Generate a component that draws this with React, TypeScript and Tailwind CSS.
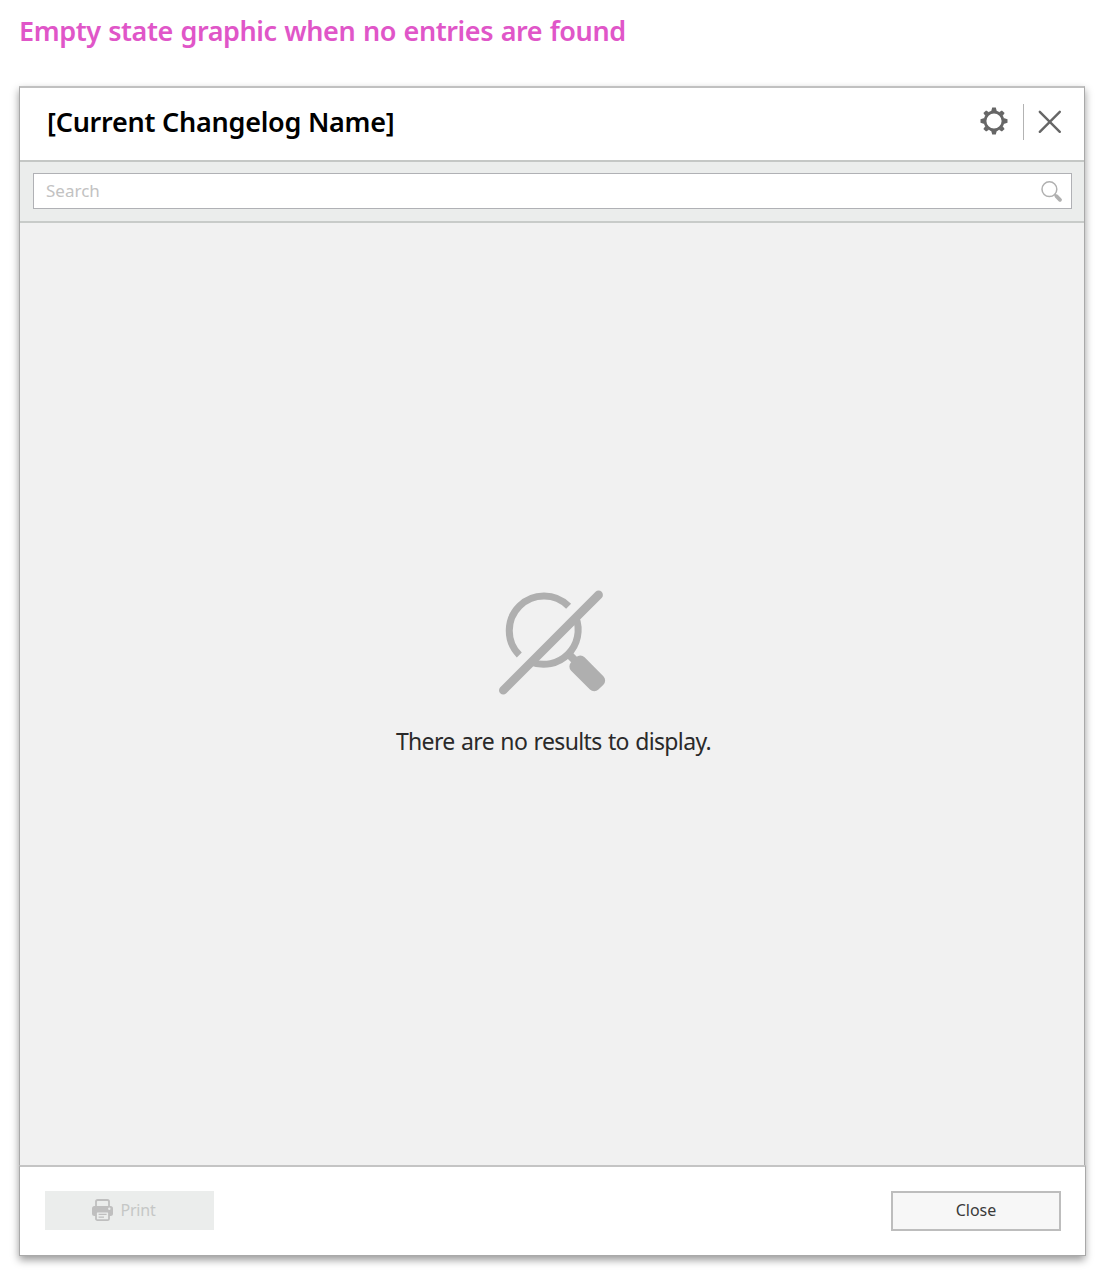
import React from "react";

const TEETH = [0, 45, 90, 135, 180, 225, 270, 315];

function GearIcon() {
  return (
    <svg width="28" height="28" viewBox="-14 -14 28 28" className="mb-[3px] block shrink-0">
      <circle r="9" fill="none" stroke="#666" strokeWidth="2.8" />
      {TEETH.map((a) => (
        <path
          key={a}
          d={a % 90 === 0 ? "M-2.9-9.6-1.8-13.5H1.8L2.9-9.6Z" : "M-2.6-9.6-1.9-13.1H1.9L2.6-9.6Z"}
          fill="#666"
          transform={`rotate(${a})`}
        />
      ))}
    </svg>
  );
}

function CloseIcon() {
  return (
    <svg width="24" height="24" viewBox="0 0 24 24" className="block shrink-0">
      <path d="M1.8 1.8 21.8 21.8M21.8 1.8 1.8 21.8" stroke="#666" strokeWidth="2.4" strokeLinecap="round" />
    </svg>
  );
}

function SearchIcon() {
  return (
    <svg width="22" height="22" viewBox="0 0 22 22" className="block shrink-0" fill="none" stroke="#b0b0b0">
      <circle cx="8.4" cy="8.2" r="7.4" strokeWidth="1.5" />
      <path d="M13.4 13.2 16 16" strokeWidth="1.8" />
      <path d="M15.4 15.2 19 18.8" strokeWidth="3.8" strokeLinecap="round" />
    </svg>
  );
}

function NoResultsIcon() {
  return (
    <svg width="110" height="108" viewBox="498 588 110 108" className="ml-0.5 block" fill="none" stroke="#afafaf">
      <path d="M519.3 655A34.5 34.5 0 0 1 568.6 606.2" strokeWidth="7" />
      <path d="M575.8 617.3A34.5 34.5 0 0 1 531 661.9" strokeWidth="7" />
      <path d="M503.3 690.2 598.6 594.9" strokeWidth="8.6" strokeLinecap="round" />
      <path d="M568 653.5 577 662.5" strokeWidth="8" />
      <rect
        x="-19.5"
        y="-9.5"
        width="38.6"
        height="19"
        rx="6"
        fill="#afafaf"
        stroke="none"
        transform="translate(587.4 673.6) rotate(45)"
      />
    </svg>
  );
}

function PrinterIcon() {
  return (
    <svg width="21" height="22" viewBox="0 0 21 22" className="block shrink-0">
      <path d="M4 8V2.6Q4 1 5.6 1H15.4Q17 1 17 2.6V8" fill="none" stroke="#bfbfbf" strokeWidth="1.8" />
      <path d="M2.5 7H18.5Q21 7 21 9.5V14.5Q21 17 18.5 17H2.5Q0 17 0 14.5V9.5Q0 7 2.5 7Z" fill="#bfbfbf" />
      <rect x="4" y="12.5" width="13" height="8.6" rx="1.4" fill="#ebedec" stroke="#bfbfbf" strokeWidth="1.8" />
      <path d="M6.6 15.3H14.6M6.6 18.2H12" stroke="#bfbfbf" strokeWidth="1.3" />
      <circle cx="17.3" cy="9.8" r="1.2" fill="#ebedec" />
    </svg>
  );
}

export default function App() {
  return (
    <div className="h-[1274px] w-[1104px] overflow-hidden bg-white pl-[19px] font-['Noto_Sans',sans-serif]">
      <h1 className="flex h-[86px] items-start pt-[11px] text-[27px] leading-[40px] font-semibold whitespace-nowrap text-[#e056c8]">
        <span className="tracking-[-0.42px] [word-spacing:1px]">Empty state graphic when no entries are found</span>
      </h1>

      <div className="flex h-[1170px] w-[1066px] flex-col shadow-[0_4px_8px_rgba(0,0,0,0.4)]">
        <div className="flex h-[1079px] w-[1066px] flex-col border-x border-t-2 border-x-[#a9a9a9] border-t-[#c0c0c0] bg-[#f1f1f1]">
          <header className="flex h-[74px] items-center border-b-2 border-[#c4c7c5] bg-white pr-[22px] pb-[4px] pl-[27px]">
            <span className="text-[27px] leading-[40px] font-semibold tracking-[-0.25px] whitespace-nowrap text-black">
              [Current Changelog Name]
            </span>
            <div className="ml-auto flex items-center">
              <GearIcon />
              <div className="mr-3.5 ml-[15px] h-9 w-px bg-[#b3b3b3]" />
              <CloseIcon />
            </div>
          </header>

          <div className="flex h-[61px] items-start border-b-2 border-[#c8cbc9] bg-[#ebedec] pt-[11px] pr-3 pl-[13px]">
            <div className="flex h-9 w-full items-center border border-[#b0b1b5] bg-white pr-2 pl-3">
              <span className="text-[17px] text-[#c2c2c2]">Search</span>
              <div className="ml-auto pt-px">
                <SearchIcon />
              </div>
            </div>
          </div>

          <main className="flex flex-1 flex-col items-center pt-[365px]">
            <NoResultsIcon />
            <p className="mt-[29px] ml-[3px] text-[23px] leading-[32px] tracking-[-0.64px] whitespace-nowrap text-[#2a2a2a] [word-spacing:1px]">
              There are no results to display.
            </p>
          </main>
        </div>

        <footer className="flex h-[91px] w-[1067px] items-start justify-between border border-t-2 border-[#a9a9a9] border-t-[#c4c4c4] bg-white pt-[24px] pr-[24px] pl-[25px]">
          <button className="flex h-[39px] w-[169px] items-center justify-center bg-[#ebedec] pr-[11px] pb-px text-[16px] text-[#c5c7c6]">
            <PrinterIcon />
            <span className="ml-[7px] tracking-[-0.2px]">Print</span>
          </button>
          <button className="flex h-[40px] w-[170px] items-center justify-center border-2 border-[#bdbdbd] bg-[#f7f7f7] pb-0.5 text-[16px] text-[#3a3a3a]">
            <span>Close</span>
          </button>
        </footer>
      </div>
    </div>
  );
}
